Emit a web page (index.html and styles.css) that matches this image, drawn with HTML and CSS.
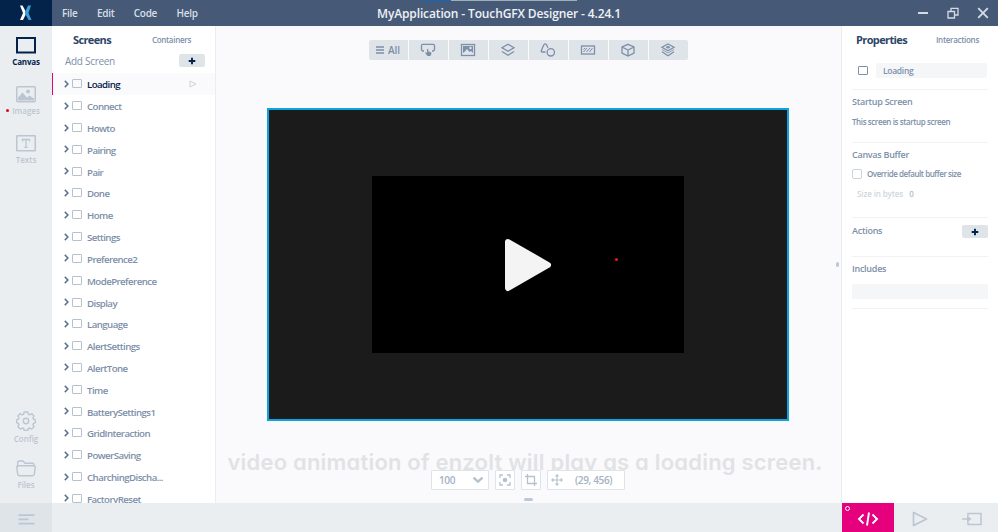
FILE: index.html
```html
<!DOCTYPE html>
<html lang="en">
<head>
  <meta charset="UTF-8" />
  <title>MyApplication - TouchGFX Designer</title>
  <link rel="stylesheet" href="styles.css">
</head>
<body>
  <!-- Title bar -->
  <header class="titlebar">
    <div class="logo">
      <svg width="12" height="16" viewBox="0 0 12 16"><path d="M0 .5h2.500L5.500 6v4L3 15H0l3-7z" fill="#fff"/><path d="M8 .5h3L8.500 8l3 7h-3L4.800 8z" fill="#3b9fd8"/></svg>
    </div>
    <nav class="menu">
      <a>File</a>
      <a>Edit</a>
      <a>Code</a>
      <a>Help</a>
    </nav>
    <div class="progress"><div class="progress-done"></div></div>
    <div class="app-title">MyApplication - TouchGFX Designer - 4.24.1</div>
    <div class="window-buttons">
      <svg width="12" height="12" viewBox="0 0 12 12"><path d="M1 6h10" stroke-width="2"/></svg>
      <svg width="12" height="12" viewBox="0 0 12 12"><path d="M1 4.500h6.500V11H1zM4 4V1.300h7V8H8" stroke-width="1.300"/></svg>
      <svg width="12" height="12" viewBox="0 0 12 12"><path d="M1.200 1.200l9.600 9.600M10.800 1.200l-9.600 9.600" stroke-width="1.900"/></svg>
    </div>
  </header>

  <main class="workspace">
    <!-- Left navigation -->
    <aside class="sidebar">
      <div class="side-item active">
        <svg width="20" height="17" viewBox="0 0 20 17"><rect x="1" y="1" width="18" height="14.500" fill="none" stroke="currentColor" stroke-width="2"/></svg>
        <span>Canvas</span>
      </div>
      <div class="side-item images">
        <svg width="20" height="17" viewBox="0 0 20 17"><rect x=".75" y=".75" width="18.500" height="15" rx="1" fill="none" stroke="currentColor" stroke-width="1.500"/><path d="M2 14.500v-3l4.500-5 4.500 5 2.500-2 4.500 3v2z" fill="currentColor"/><circle cx="12" cy="5.500" r="2" fill="currentColor"/></svg>
        <span>Images</span>
      </div>
      <div class="side-item">
        <svg width="20" height="17" viewBox="0 0 20 17"><rect x=".75" y=".75" width="18.500" height="15" rx=".5" fill="none" stroke="currentColor" stroke-width="1.500"/><path d="M6.500 6.500v-2h7v2M10 4.500v8M8.300 12.300h3.400" fill="none" stroke="currentColor" stroke-width="1.300"/></svg>
        <span>Texts</span>
      </div>
      <div class="side-item config">
        <svg width="20" height="20" viewBox="0 0 20 20" fill="none" stroke="currentColor" stroke-width="1.400" stroke-linejoin="round"><path d="M8.200 1h3.600l.6 2.300 1.200.5 2.100-1.200 2.300 2.300-1.100 2.100.5 1.200 2 .6v2.900l-2 .8-.5 1.200 1.200 2-2.500 2.400-2-1.100-1.300.5-.5 2H8.200l-.6-2-1.300-.5-2 1.100-2.400-2.400 1.100-2-.5-1.200-1.900-.8V8.800l1.900-.6.5-1.200-1.100-2.100 2.300-2.300 2.100 1.200 1.300-.5z"/><circle cx="10" cy="10" r="2.700"/></svg>
        <span>Config</span>
      </div>
      <div class="side-item files">
        <svg width="20" height="17" viewBox="0 0 20 17" fill="none" stroke="currentColor" stroke-width="1.400" stroke-linejoin="round"><path d="M1.700 7V2.200Q1.700 1 3 1h4l2 2.300h7.500q1.500 0 1.500 1.400v1"/><path d="M2 5.700h16q1.400 0 1.200 1.500l-.9 7q-.2 1.500-1.700 1.500H3.400q-1.500 0-1.700-1.500l-.9-7Q.6 5.700 2 5.700z"/></svg>
        <span>Files</span>
      </div>
    </aside>

    <!-- Screens list -->
    <section class="screens">
      <div class="tabs">
        <span class="tab-active">Screens</span>
        <span class="tab">Containers</span>
      </div>
      <div class="add-screen">
        <span>Add Screen</span>
        <button class="plus-btn"><svg width="8" height="8" viewBox="0 0 8 8"><path d="M4 .7v6.600M.7 4h6.600" stroke="#03234b" stroke-width="1.900"/></svg></button>
      </div>
      <ul class="screen-list" id="screenList">
        <!-- Filled by JavaScript -->
      </ul>
    </section>

    <!-- Canvas -->
    <section class="canvas">
      <div class="toolbar">
        <button><svg width="8" height="8" viewBox="0 0 8 8"><path d="M0 1h8M0 4h8M0 7h8"/></svg><span>All</span></button>
        <button><svg width="16" height="14" viewBox="0 0 16 14"><path d="M4 8H2.700L1.500 6.800V2.500Q1.500 1.300 2.700 1.300h10.600q1.200 0 1.200 1.200v4.300L13.300 8H12"/><path d="M7 6h1.300v2.500l3 .8v2L10.300 13H7.500L5 9.800l1-.5 1 .8z" fill="currentColor" stroke="none"/></svg></button>
        <button><svg width="16" height="14" viewBox="0 0 16 14"><rect x="1.500" y="1.500" width="13" height="11"/><path d="M3 3h10v7l-2-2-1.500 1L7 6l-2 2.500L3 10z" fill="currentColor" stroke="none"/><circle cx="10.500" cy="5" r="1.200" fill="#dfe4e8" stroke="none"/></svg></button>
        <button><svg width="16" height="14" viewBox="0 0 16 14"><path d="M8 1.300l6 3.400-6 3.500-6-3.500zM2 8.500L8 12.300l6-3.800"/></svg></button>
        <button><svg width="16" height="14" viewBox="0 0 16 14"><path d="M5.500 9H2.200Q1 9 1.300 7.800L3.700 2Q5-.2 6.500 1.800L8 4.800"/><circle cx="10.800" cy="9.300" r="3.700"/></svg></button>
        <button><svg width="16" height="14" viewBox="0 0 16 14"><rect x="1.500" y="3" width="13" height="8"/><path d="M3.500 9l3.500-4M6.500 9l3.500-4M9.500 9l3-4M3.500 6.500L5 5" stroke-width="1"/></svg></button>
        <button><svg width="16" height="14" viewBox="0 0 16 14"><path d="M8 1.300l6 2.700v6l-6 3-6-3V4zM2 4l6 3 6-3M8 7v6"/></svg></button>
        <button><svg width="16" height="14" viewBox="0 0 16 14"><path d="M8 1l6 3.300-6 3.400-6-3.400zM2 8.800L8 12.800l6-4" stroke-width="1.300"/><path d="M2 6.500l6 3.500 6-3.500" stroke-width=".8"/><path d="M8 3.300l2 1-2 1-2-1z" fill="currentColor" stroke-width=".8"/></svg></button>
      </div>

      <div class="screen-preview">
        <div class="video">
          <svg width="48" height="54" viewBox="0 0 48 54"><path d="M4 4L44 27 4 50z" fill="#f4f4f4" stroke="#f4f4f4" stroke-width="6" stroke-linejoin="round"/></svg>
          <i class="red-dot"></i>
        </div>
      </div>

      <div class="caption">video animation of enzolt will play as a loading screen.</div>

      <div class="view-controls">
        <div class="control zoom-level"><span>100</span><svg width="12" height="8" viewBox="0 0 12 8"><path d="M1.500 1.700L6 5.700l4.500-4" stroke-width="2.400"/></svg></div>
        <div class="control square"><svg width="12" height="12" viewBox="0 0 12 12"><path d="M1 4V1h3M8 1h3v3M11 8v3H8M4 11H1V8" stroke-width="1.300"/><circle cx="6" cy="6" r="2.300" fill="currentColor" stroke="none"/></svg></div>
        <div class="control square"><svg width="12" height="12" viewBox="0 0 12 12"><path d="M2.500 0v9.500H12M0 2.500h9.500V12" stroke-width="1.300"/></svg></div>
        <div class="control position"><svg width="12" height="12" viewBox="0 0 12 12"><path d="M6 1v10M1 6h10M4.500 2.300L6 .8l1.500 1.500M4.500 9.700L6 11.200l1.500-1.500M2.300 4.500L.8 6l1.500 1.500M9.700 4.500L11.200 6 9.700 7.500" stroke-width="1.100"/></svg><span>(29, 456)</span></div>
      </div>
      <i class="handle-bottom"></i>
      <i class="handle-right"></i>
    </section>

    <!-- Properties -->
    <aside class="properties">
      <div class="tabs">
        <span class="tab-active">Properties</span>
        <span class="tab">Interactions</span>
      </div>
      <div class="prop-name">
        <i class="screen-icon"></i>
        <div class="input">Loading</div>
      </div>
      <div class="prop startup">
        <h2>Startup Screen</h2>
        <p>This screen is startup screen</p>
      </div>
      <div class="prop buffer">
        <h2>Canvas Buffer</h2>
        <label><i class="checkbox"></i>Override default buffer size</label>
        <div class="bytes">Size in bytes <b>0</b></div>
      </div>
      <div class="prop actions">
        <h2>Actions</h2>
        <button class="plus-btn"><svg width="8" height="8" viewBox="0 0 8 8"><path d="M4 .7v6.600M.7 4h6.600" stroke="#03234b" stroke-width="1.900"/></svg></button>
      </div>
      <div class="prop includes">
        <h2>Includes</h2>
        <div class="input"></div>
      </div>
    </aside>
  </main>

  <!-- Bottom bar -->
  <footer class="bottombar">
    <div class="log-btn"><svg width="17" height="11" viewBox="0 0 17 11"><path d="M.5 1.200h16M.5 5.400h10M.5 9.600h16" stroke="#bcc6d2" stroke-width="1.700"/></svg></div>
    <div class="code-btn">
      <i></i>
      <svg width="22" height="16" viewBox="0 0 22 16"><path d="M6.500 3.500L2 8l4.500 4.500M15.500 3.500L20 8l-4.500 4.500M12 1.500L10 14.500" fill="none" stroke="#fff" stroke-width="1.900"/></svg>
    </div>
    <div class="run-btn"><svg width="16" height="16" viewBox="0 0 16 16"><path d="M1.500 1.500V14.500L14.500 8z" stroke-width="1.700" stroke-linejoin="round"/></svg></div>
    <div class="run-btn"><svg width="20" height="14" viewBox="0 0 20 14"><path d="M6 4V1.500h13v11H6V10" stroke-width="1.500"/><path d="M0 7h8" stroke-width="1.500"/><path d="M5 3.500L9.500 7 5 10.500z" fill="currentColor" stroke="none"/></svg></div>
  </footer>

  <script>
    const screens = ['Loading', 'Connect', 'Howto', 'Pairing', 'Pair', 'Done', 'Home', 'Settings',
      'Preference2', 'ModePreference', 'Display', 'Language', 'AlertSettings', 'AlertTone', 'Time',
      'BatterySettings1', 'GridInteraction', 'PowerSaving', 'CharchingDischa...', 'FactoryReset'];

    const list = document.getElementById('screenList');

    screens.forEach((name, i) => {
      const row = document.createElement('li');
      // First screen is the selected one
      if (i === 0) row.className = 'selected';
      row.innerHTML = `
        <svg class="chevron" width="5" height="8" viewBox="0 0 5 8"><path d="M.8 .9L3.900 4 .8 7.100"/></svg>
        <i class="screen-icon"></i>
        <span>${name}</span>
        ${i === 0 ? '<svg class="play" width="8" height="8" viewBox="0 0 8 8"><path d="M1 1v6l6-3z"/></svg>' : ''}
      `;
      list.appendChild(row);
    });
  </script>
</body>
</html>
```
FILE: styles.css
```css
* {
  box-sizing: border-box;
}

body {
  margin: 0;
  height: 532px;
  display: flex;
  flex-direction: column;
  overflow: hidden;
  font-family: 'Open Sans', 'Noto Sans', sans-serif;
  font-weight: 600;
  font-size: 10px;
  color: #7d8fa9;
  background: #fafafc;
}

svg {
  display: block;
  flex: none;
}

button {
  border: none;
  padding: 0;
  font: inherit;
  color: inherit;
  display: flex;
  align-items: center;
  justify-content: center;
}

/* Title bar */
.titlebar {
  height: 26px;
  flex: none;
  position: relative;
  display: flex;
  align-items: center;
  background: #465a78;
  color: #d8dfe7;
}

.logo {
  width: 52px;
  height: 26px;
  background: #03234b;
  display: flex;
  align-items: center;
  justify-content: center;
}

.menu {
  display: flex;
  gap: 19.500px;
  padding-left: 10px;
  font-size: 10px;
  line-height: 28px;
  letter-spacing: -0.300px;
}

.progress {
  position: absolute;
  left: 421px;
  top: 0;
  width: 156px;
  height: 1px;
  background: #9fb0b8;
}

.progress-done {
  width: 30px;
  height: 1px;
  background: #1467b8;
}

.app-title {
  position: absolute;
  left: 0;
  right: 0;
  text-align: center;
  font-size: 12px;
  line-height: 27px;
  letter-spacing: -0.130px;
  color: #eef1f5;
}

.window-buttons {
  margin-left: auto;
  display: flex;
  gap: 18px;
  padding-right: 9px;
}

.window-buttons path {
  fill: none;
  stroke: #d3dae2;
}

.workspace {
  flex: 1;
  min-height: 0;
  display: flex;
}

/* Left navigation */
.sidebar {
  width: 52px;
  flex: none;
  display: flex;
  flex-direction: column;
  background: #ebeef1;
  padding: 11px 0 12px;
  font-size: 8px;
}

.side-item {
  height: 49px;
  display: flex;
  flex-direction: column;
  align-items: center;
  color: #bcc6d2;
}

.side-item span {
  margin-top: 2px;
  line-height: 12px;
}

.side-item.active {
  color: #03234b;
  font-weight: 700;
  letter-spacing: -0.200px;
}

.images {
  position: relative;
}

.images::before {
  content: '';
  position: absolute;
  left: 6px;
  top: 23px;
  width: 3px;
  height: 3px;
  border-radius: 50%;
  background: #e30613;
}

.config {
  margin-top: auto;
}

.side-item.files {
  height: 31px;
}

/* Tabs above the side panels */
.tabs {
  display: flex;
  align-items: center;
  height: 26px;
}

.tab-active {
  font-size: 11px;
  font-weight: 700;
  letter-spacing: -0.620px;
  color: #2e4568;
}

.tab {
  font-size: 8px;
  letter-spacing: -0.300px;
}

/* Screens list */
.screens {
  width: 164px;
  flex: none;
  background: white;
  border-right: 1px solid #ebeef1;
  overflow: hidden;
}

.screens .tabs {
  padding: 0 24px 0 21px;
  justify-content: space-between;
}

.add-screen {
  height: 21px;
  padding: 0 10px 4px 13px;
  display: flex;
  align-items: center;
  justify-content: space-between;
  font-weight: 500;
  letter-spacing: -0.300px;
}

.plus-btn {
  width: 26px;
  height: 13px;
  border-radius: 2px;
  background: #dfe4e8;
}

.screen-list {
  list-style: none;
  margin: 0;
  padding: 0;
}

.screen-list li {
  height: 21.820px;
  display: flex;
  align-items: center;
  padding-left: 12px;
}

.screen-list .selected {
  background: #fafafc;
  box-shadow: inset 1px 0 #e6007e;
  color: #03234b;
}

.chevron {
  margin-right: 3px;
}

.chevron path {
  fill: none;
  stroke: #5b7190;
  stroke-width: 1.500;
}

.screen-icon {
  width: 10px;
  height: 9px;
  flex: none;
  border: 1px solid #b5c1cd;
  border-radius: 1px;
}

.screen-list span {
  margin-left: 5px;
  padding-top: 2px;
  font-size: 9.700px;
  letter-spacing: -0.580px;
}

.play {
  margin-left: auto;
  margin-right: 18px;
}

.play path {
  fill: none;
  stroke: #cbd3db;
}

/* Canvas */
.canvas {
  flex: 1;
  min-width: 0;
  position: relative;
  display: flex;
  flex-direction: column;
  align-items: center;
  padding: 14px 1px 0 0;
}

.toolbar {
  display: flex;
  gap: 1px;
  border-radius: 2px;
  overflow: hidden;
}

.toolbar button {
  width: 39px;
  height: 20px;
  gap: 4px;
  background: #dfe4e8;
}

.toolbar svg {
  color: #7d8fa9;
  fill: none;
  stroke: #7d8fa9;
  stroke-width: 1.300;
}

.screen-preview {
  width: 522px;
  height: 313px;
  flex: none;
  margin-top: 48px;
  border: 2px solid #0ba3e0;
  background: #1b1b1b;
  display: flex;
  align-items: center;
  justify-content: center;
}

.video {
  width: 312px;
  height: 177px;
  position: relative;
  background: black;
  display: flex;
  align-items: center;
  justify-content: center;
}

.red-dot {
  position: absolute;
  left: 243px;
  top: 82px;
  width: 3px;
  height: 3px;
  border-radius: 50%;
  background: #f01810;
}

.caption {
  margin: 27px 6px 0 0;
  height: 28px;
  font-family: Inter, sans-serif;
  font-feature-settings: 'cv11';
  font-weight: 600;
  font-size: 22px;
  line-height: 29px;
  letter-spacing: 0.200px;
  white-space: nowrap;
  color: #e2e2e4;
}

.view-controls {
  position: relative;
  margin-top: -6px;
  display: flex;
  gap: 6px;
  color: #a4b2c2;
}

.control {
  height: 20px;
  display: flex;
  align-items: center;
  justify-content: center;
  border: 1px solid #dfe4e8;
  border-radius: 1px;
  background: white;
}

.control svg {
  color: #b5c1cf;
  fill: none;
  stroke: #b5c1cf;
}

.zoom-level {
  width: 58px;
  justify-content: space-between;
  padding: 0 4px 0 7px;
  letter-spacing: -0.400px;
}

.square {
  width: 20px;
}

.position {
  width: 78px;
  justify-content: flex-start;
  padding-left: 3px;
  gap: 12px;
  letter-spacing: -0.350px;
}

.handle-bottom {
  width: 9px;
  height: 3px;
  margin-top: 8px;
  border-radius: 2px;
  background: #bcc8d6;
}

.handle-right {
  position: absolute;
  right: 2px;
  top: 236px;
  width: 3px;
  height: 5px;
  border-radius: 2px;
  background: #bcc8d6;
}

/* Properties */
.properties {
  width: 157px;
  flex: none;
  background: white;
  border-left: 1px solid #e8ebef;
  padding: 0 10px;
}

.properties .tabs {
  padding: 0 9px 0 4px;
  justify-content: space-between;
}

.prop-name {
  height: 37px;
  padding: 0 1px 0 6px;
  display: flex;
  align-items: center;
  gap: 8px;
  font-size: 8.500px;
  letter-spacing: -0.300px;
}

.prop-name .screen-icon {
  border-color: #7d8fa9;
}

.input {
  flex: 1;
  height: 15px;
  line-height: 15px;
  padding-left: 7px;
  border-radius: 2px;
  background: #f5f6f8;
}

.prop {
  border-top: 1px solid #f0f2f4;
}

.prop h2 {
  margin: 0;
  font-size: 9px;
  font-weight: 600;
  line-height: 12px;
  letter-spacing: -0.270px;
}

.startup {
  height: 53px;
  padding-top: 6px;
}

.startup p {
  margin: 8px 0 0;
  font-size: 8px;
  line-height: 11px;
  letter-spacing: -0.400px;
}

.buffer {
  height: 75px;
  padding-top: 6px;
}

.buffer label {
  display: flex;
  align-items: center;
  gap: 5px;
  margin-top: 7px;
  font-size: 8px;
  line-height: 12px;
  letter-spacing: -0.440px;
}

.checkbox {
  width: 10px;
  height: 10px;
  border: 1px solid #ccd4dc;
  border-radius: 2px;
}

.bytes {
  margin: 8px 0 0 5px;
  font-size: 8px;
  line-height: 12px;
  letter-spacing: -0.100px;
  color: #cfd6de;
}

.bytes b {
  margin-left: 4px;
  color: #b0bcc9;
  font-weight: 600;
}

.actions {
  height: 39px;
  padding-top: 7px;
  display: flex;
  align-items: flex-start;
  justify-content: space-between;
}

.includes {
  height: 53px;
  padding-top: 6px;
  border-bottom: 1px solid #f0f2f4;
}

.includes .input {
  margin-top: 9px;
}

/* Bottom bar */
.bottombar {
  height: 29px;
  flex: none;
  display: flex;
  background: #ebeef1;
}

.bottombar > div {
  width: 52px;
  display: flex;
  align-items: center;
  justify-content: center;
}

.bottombar .log-btn {
  margin-right: auto;
  padding-top: 3px;
  background: #dfe4e8;
}

.code-btn {
  position: relative;
  background: #e6007e;
}

.code-btn svg,
.run-btn svg {
  margin-top: 3px;
}

.code-btn i {
  position: absolute;
  left: 3px;
  top: 3px;
  width: 5px;
  height: 5px;
  border: 1px solid white;
  border-radius: 50%;
}

.run-btn svg {
  color: #bcc6d2;
  fill: none;
  stroke: #bcc6d2;
}
```
